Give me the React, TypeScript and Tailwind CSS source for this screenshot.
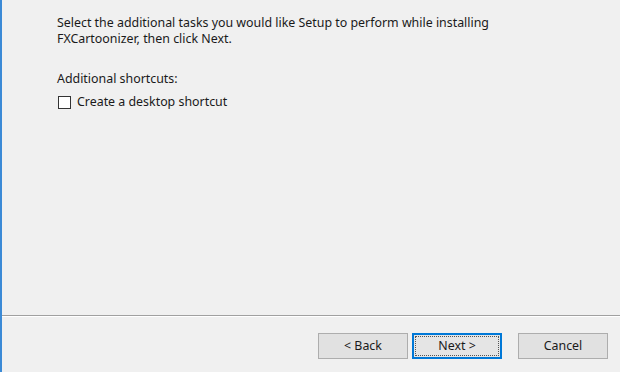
const font = { fontFamily: '"Noto Sans", "Open Sans", sans-serif' }

function DialogButton({ label, focused }: { label: string; focused?: boolean }) {
  return (
    <button
      className={
        focused
          ? 'flex h-[26px] w-[90px] items-center justify-center border-2 border-[#0078d7] bg-[#e5e5e5] p-[1px] text-[12.4px] text-[#1a1a1a]'
          : 'flex h-[26px] w-[90px] items-center justify-center border border-[#adadad] bg-[#e1e1e1] text-[12.4px] text-[#1a1a1a]'
      }
    >
      {focused ? (
        <span className="flex h-full w-full items-center justify-center border border-dotted border-[#555]">
          {label}
        </span>
      ) : (
        label
      )}
    </button>
  )
}

export default function App() {
  return (
    <div
      className="flex h-[372px] w-[620px] flex-col border-l-2 border-[#3b8ad6] bg-[#f0f0f0] text-[12.4px] text-[#1a1a1a]"
      style={font}
    >
      <div className="h-[315px] pl-[55px] pt-[15px]">
        <p className="leading-[16px]">
          Select the additional tasks you would like Setup to perform while installing
          <br />
          FXCartoonizer, then click Next.
        </p>
        <p className="mt-[24px] leading-[16px]">Additional shortcuts:</p>
        <label className="mt-[7px] flex items-center gap-[6px] pl-[1px] leading-[16px]">
          <span className="h-[13px] w-[13px] border border-[#333] bg-white" />
          Create a desktop shortcut
        </label>
      </div>
      <div className="h-[2px] border-t border-[#a0a0a0] bg-white" />
      <div className="flex flex-1 items-start justify-end pr-[12px] pt-[16px]">
        <DialogButton label="< Back" />
        <div className="w-[4px]" />
        <DialogButton label="Next >" focused />
        <div className="w-[16px]" />
        <DialogButton label="Cancel" />
      </div>
    </div>
  )
}
